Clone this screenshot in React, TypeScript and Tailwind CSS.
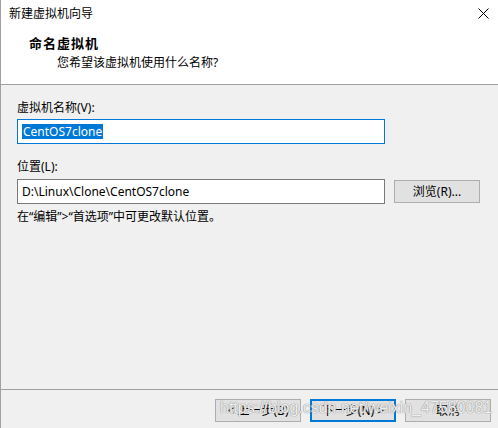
import React from 'react';

const ui = "font-['Noto_Sans','Noto_Sans_CJK_SC',sans-serif]";

const WinButton: React.FC<{ label: string; primary?: boolean }> = ({ label, primary }) => (
  <div
    className={`w-[86px] h-[23px] flex items-center justify-center bg-[#e1e1e1] text-[12px] leading-[16px] text-black ${
      primary ? 'border-2 border-[#0078d7]' : 'border border-[#adadad]'
    }`}
  >
    {label}
  </div>
);

const App: React.FC = () => {
  return (
    <div className={`${ui} relative w-[498px] h-[428px] bg-[#f0f0f0] border-l border-[#a0a0a0] flex flex-col text-[12px] leading-[16px] text-black`}>
      {/* Header */}
      <div className="h-[85px] bg-white border-b border-[#a0a0a0] flex flex-col">
        <div className="flex items-start justify-between pl-[8px] pr-[9px] pt-[6px]">
          <span>新建虚拟机向导</span>
          <svg width="11" height="11" viewBox="0 0 11 11" className="mt-[2px]">
            <path d="M0.5 0.5 L10.5 10.5 M10.5 0.5 L0.5 10.5" stroke="#000" strokeWidth="1" />
          </svg>
        </div>
        <div className="pl-[28px] mt-[13px] font-bold text-[13px] tracking-[1px]">命名虚拟机</div>
        <div className="pl-[56px] mt-[4px]">您希望该虚拟机使用什么名称?</div>
      </div>

      {/* Body */}
      <div className="flex-1 flex flex-col px-[16px] pt-[15px]">
        <div>虚拟机名称(V):</div>
        <div className="mt-[3px] w-[368px] h-[25px] bg-white border border-[#0078d7] flex items-center pl-[4px]">
          <span className="bg-[#0078d7] text-white px-[1px] leading-[15px]">CentOS7clone</span>
        </div>

        <div className="mt-[15px]">位置(L):</div>
        <div className="mt-[4px] flex items-center gap-[9px]">
          <div className="w-[368px] h-[25px] bg-white border border-[#7a7a7a] flex items-center pl-[4px]">
            D:\Linux\Clone\CentOS7clone
          </div>
          <WinButton label="浏览(R)..." />
        </div>

        <div className="mt-[5px]">在“编辑”&gt;“首选项”中可更改默认位置。</div>
      </div>

      {/* Footer */}
      <div className="h-[39px] border-t border-[#a0a0a0] flex justify-end items-start gap-[9px] pr-[7px] pt-[9px]">
        <WinButton label="< 上一步(B)" />
        <WinButton label="下一步(N) >" primary />
        <WinButton label="取消" />
      </div>

      {/* watermark */}
      <div className="absolute left-[219px] top-[400px] font-['Liberation_Sans',sans-serif] text-[16px] leading-[16px] text-white/85 [text-shadow:0_0_1px_#8a8a8a,0_0_1px_#8a8a8a] pointer-events-none whitespace-nowrap">
        https://blog.csdn.net/weixin_47580081
      </div>
    </div>
  );
};

export default App;
